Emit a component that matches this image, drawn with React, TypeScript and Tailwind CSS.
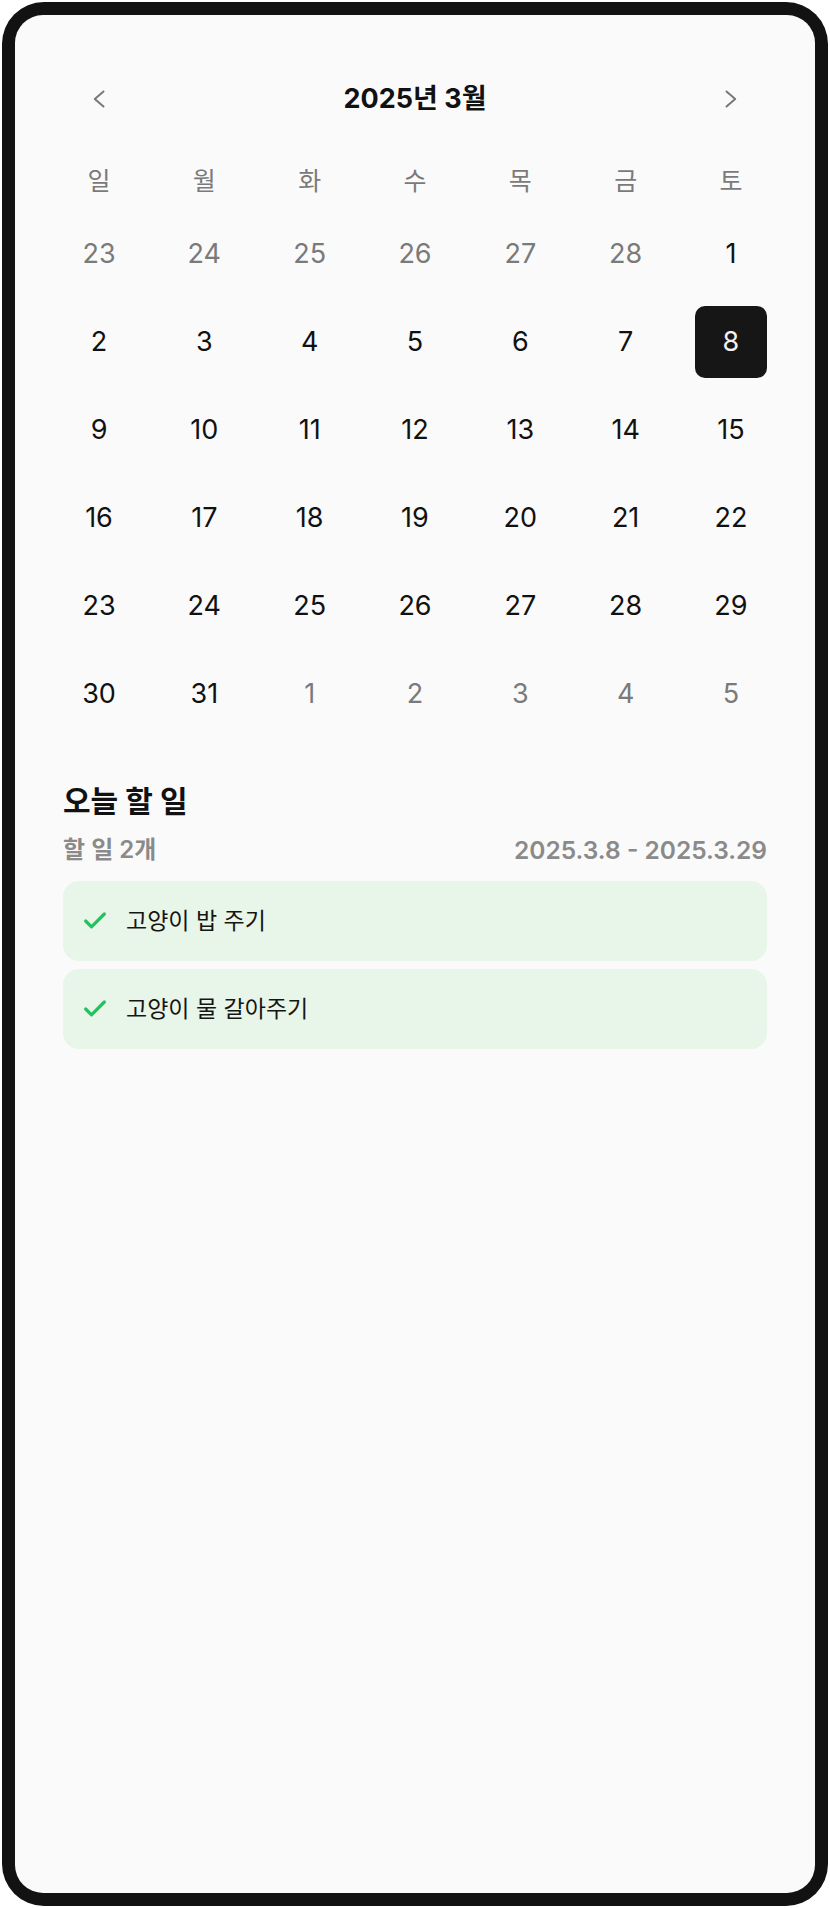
import { Check } from "lucide-react";

type Day = { d: number; muted?: boolean; selected?: boolean };

const weeks: Day[][] = [
  [
    { d: 23, muted: true },
    { d: 24, muted: true },
    { d: 25, muted: true },
    { d: 26, muted: true },
    { d: 27, muted: true },
    { d: 28, muted: true },
    { d: 1 },
  ],
  [{ d: 2 }, { d: 3 }, { d: 4 }, { d: 5 }, { d: 6 }, { d: 7 }, { d: 8, selected: true }],
  [{ d: 9 }, { d: 10 }, { d: 11 }, { d: 12 }, { d: 13 }, { d: 14 }, { d: 15 }],
  [{ d: 16 }, { d: 17 }, { d: 18 }, { d: 19 }, { d: 20 }, { d: 21 }, { d: 22 }],
  [{ d: 23 }, { d: 24 }, { d: 25 }, { d: 26 }, { d: 27 }, { d: 28 }, { d: 29 }],
  [
    { d: 30 },
    { d: 31 },
    { d: 1, muted: true },
    { d: 2, muted: true },
    { d: 3, muted: true },
    { d: 4, muted: true },
    { d: 5, muted: true },
  ],
];

const weekdays = ["일", "월", "화", "수", "목", "금", "토"];

const tasks = ["고양이 밥 주기", "고양이 물 갈아주기"];

function Chevron({ dir }: { dir: "left" | "right" }) {
  return (
    <svg width="12" height="18" viewBox="0 0 12 18" fill="none">
      <polyline
        points={dir === "left" ? "10.5,1.5 1.8,9 10.5,16.5" : "1.5,1.5 10.2,9 1.5,16.5"}
        stroke="#777777"
        strokeWidth="2"
        strokeLinecap="round"
        strokeLinejoin="round"
      />
    </svg>
  );
}

export default function App() {
  return (
    <div className="w-[830px] h-[1908px] bg-white p-[2px] font-['Inter','Noto_Sans_CJK_KR',sans-serif]">
      <div className="h-full rounded-[42px] bg-[#121212] p-[13px]">
        <div className="h-full rounded-[28px] bg-[#fafafa] px-[48px] pt-[64px]">
          {/* Header */}
          <div className="flex h-[40px] items-center justify-between">
            <button className="flex w-[72px] justify-center">
              <Chevron dir="left" />
            </button>
            <div className="text-[27px] font-bold text-[#111111]">2025년 3월</div>
            <button className="flex w-[72px] justify-center">
              <Chevron dir="right" />
            </button>
          </div>

          {/* Weekdays */}
          <div className="mt-[43px] grid h-[40px] grid-cols-[repeat(7,72px)] items-center justify-between text-center text-[25px] text-[#7a7a7a]">
            {weekdays.map((w) => (
              <div key={w}>{w}</div>
            ))}
          </div>

          {/* Dates */}
          <div className="mt-[16px] grid grid-cols-[repeat(7,72px)] justify-between gap-y-[16px]">
            {weeks.flat().map((day, i) => (
              <div
                key={i}
                className={
                  day.selected
                    ? "flex h-[72px] items-center justify-center rounded-[10px] bg-[#161616] text-[27px] text-[#f2f2f2]"
                    : day.muted
                    ? "flex h-[72px] items-center justify-center text-[27px] text-[#7a7a7a]"
                    : "flex h-[72px] items-center justify-center text-[27px] text-[#111111]"
                }
              >
                {day.d}
              </div>
            ))}
          </div>

          {/* Today tasks */}
          <div className="mt-[51px] text-[30px] font-bold leading-[40px] text-[#111111]">오늘 할 일</div>
          <div className="mt-[13px] flex h-[32px] items-center justify-between text-[24px] font-semibold text-[#8a8a8a]">
            <span>할 일 2개</span>
            <span className="text-[24.5px]">2025.3.8 - 2025.3.29</span>
          </div>

          <div className="mt-[15px] flex flex-col gap-[8px]">
            {tasks.map((t) => (
              <div
                key={t}
                className="flex h-[80px] items-center gap-[17px] rounded-[16px] bg-[#e8f5e9] pl-[18px]"
              >
                <Check size={28} strokeWidth={2.75} color="#22c25e" />
                <span className="text-[23px] text-[#151515]">{t}</span>
              </div>
            ))}
          </div>
        </div>
      </div>
    </div>
  );
}
